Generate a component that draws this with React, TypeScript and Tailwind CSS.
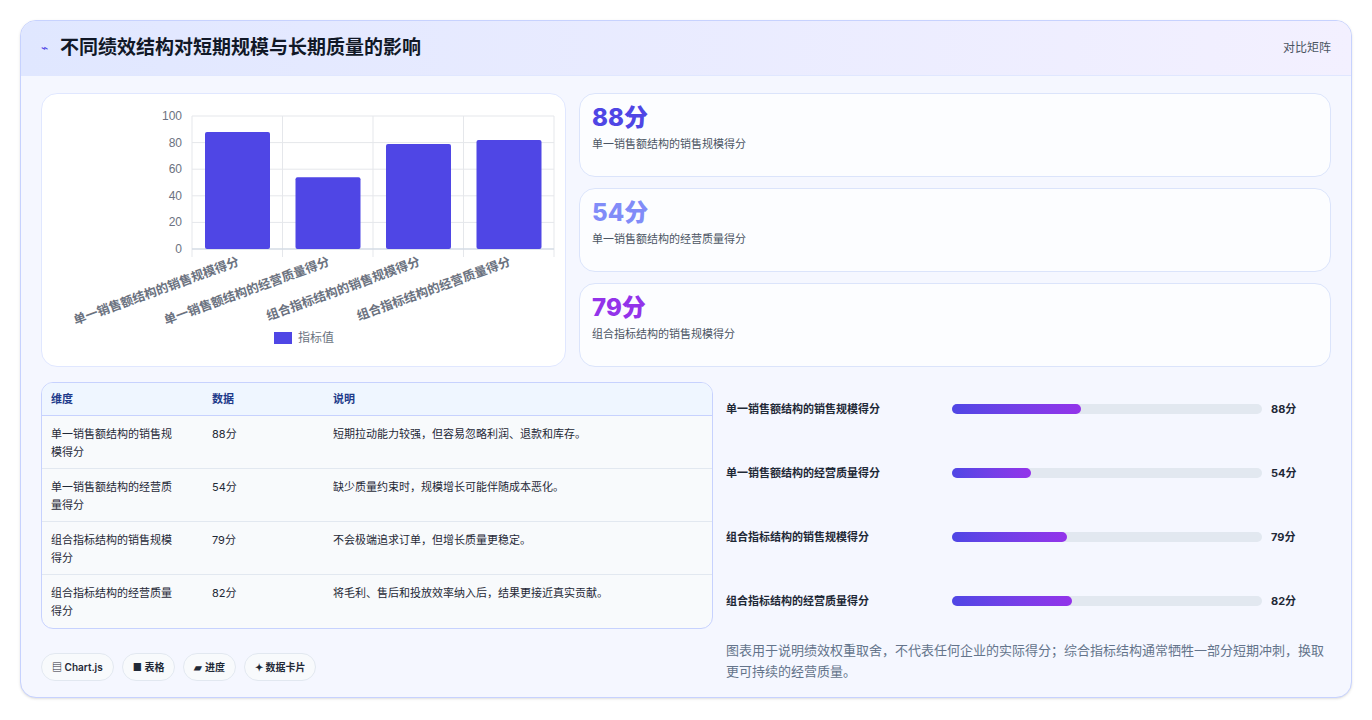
const font = { fontFamily: 'Inter, "Noto Sans CJK SC", sans-serif' };

const labels = ['单一销售额结构的销售规模得分', '单一销售额结构的经营质量得分', '组合指标结构的销售规模得分', '组合指标结构的经营质量得分'];
const values = [88, 54, 79, 82];
const barW = [129, 79, 115, 120];
const notes = [
  '短期拉动能力较强，但容易忽略利润、退款和库存。',
  '缺少质量约束时，规模增长可能伴随成本恶化。',
  '不会极端追求订单，但增长质量更稳定。',
  '将毛利、售后和投放效率纳入后，结果更接近真实贡献。',
];

function Chart() {
  const x0 = 150, x1 = 512, yTop = 22, yBot = 155;
  const step = (x1 - x0) / 4;
  return (
    <svg width="524" height="273" className="block">
      {[0, 20, 40, 60, 80, 100].map((v) => {
        const y = yBot - (v / 100) * (yBot - yTop);
        return (
          <g key={v}>
            <line x1={x0} x2={x1} y1={y} y2={y} stroke="#e5e7eb" />
            <text x={x0 - 10} y={y + 4} textAnchor="end" fontSize="12" fill="#6b7280" fontFamily="Liberation Sans, sans-serif">{v}</text>
          </g>
        );
      })}
      {[0, 1, 2, 3, 4].map((i) => (
        <line key={i} x1={x0 + i * step} x2={x0 + i * step} y1={yTop} y2={yBot + 8} stroke="#e5e7eb" />
      ))}
      <line x1={x0} x2={x1} y1={yBot} y2={yBot} stroke="#cbd5e1" />
      {values.map((v, i) => {
        const h = (v / 100) * (yBot - yTop);
        return <rect key={i} x={x0 + i * step + 13} y={yBot - h} width={65} height={h} rx="2" fill="#4f46e5" />;
      })}
      {labels.map((l, i) => (
        <text key={l} fontSize="12.5" fontWeight="600" fill="#6b7280" textAnchor="end" fontFamily='"Noto Sans CJK SC", sans-serif'
          transform={`translate(${x0 + i * step + 48},${yBot + 16}) rotate(-20)`}>{l}</text>
      ))}
      <rect x="232" y="238" width="18" height="12" fill="#4f46e5" />
      <text x="256" y="248" fontSize="12" fill="#6b7280" fontFamily='"Noto Sans CJK SC", sans-serif'>指标值</text>
    </svg>
  );
}

export default function App() {
  const stats = [
    { v: '88分', c: 'text-[#4f46e5]', l: labels[0] },
    { v: '54分', c: 'text-[#818cf8]', l: labels[1] },
    { v: '79分', c: 'text-[#9333ea]', l: labels[2] },
  ];
  return (
    <div style={font} className="min-h-[720px] bg-white p-5">
      <div className="rounded-2xl border border-[#c7d2fe] bg-[#f5f7ff] overflow-hidden shadow-sm h-[678px]">
        <div className="h-[55px] flex items-center justify-between px-5 bg-gradient-to-r from-[#e0e7ff] to-[#f3f0ff] border-b border-[#e0e7ff]">
          <div className="flex items-center gap-3">
            <span className="text-[#4f46e5] text-xs">⌁</span>
            <h1 className="text-[19px] font-bold text-[#111827]">不同绩效结构对短期规模与长期质量的影响</h1>
          </div>
          <span className="text-xs text-[#4b5563]">对比矩阵</span>
        </div>
        <div className="px-5 pt-[17px]">
          <div className="flex gap-[13px]">
            <div className="w-[525px] h-[274px] bg-white rounded-2xl border border-[#e0e7ff] overflow-hidden">
              <Chart />
            </div>
            <div className="flex-1 flex flex-col gap-[11px]">
              {stats.map((s) => (
                <div key={s.v} className="h-[84px] rounded-2xl border border-[#dbe4fb] bg-[#fcfdff] px-3 pt-2">
                  <div className={`text-2xl font-extrabold ${s.c}`}>{s.v}</div>
                  <div className="text-[11px] text-[#4b5563] mt-0.5">{s.l}</div>
                </div>
              ))}
            </div>
          </div>
          <div className="flex gap-[13px] mt-[15px]">
            <div className="w-[672px]">
              <div className="rounded-xl border border-[#c7d2fe] overflow-hidden bg-[#f8fafc] text-[11px]">
                <div className="grid grid-cols-[161px_121px_1fr] h-[33px] items-center px-[9px] bg-[#eff6ff] border-b border-[#c7d2fe] font-semibold text-[#1e3a8a]">
                  <span>维度</span><span>数据</span><span>说明</span>
                </div>
                {labels.map((l, i) => (
                  <div key={l} className={`grid grid-cols-[161px_121px_1fr] h-[53px] px-[9px] pt-[9px] leading-[18px] text-[#1f2937] ${i < 3 ? 'border-b border-[#e2e8f0]' : ''}`}>
                    <span className="pr-9">{l}</span><span>{values[i]}分</span><span>{notes[i]}</span>
                  </div>
                ))}
              </div>
              <div className="flex gap-2 mt-6 text-[10px] font-semibold text-[#1f2937]">
                {['▤ Chart.js', '■ 表格', '▰ 进度', '✦ 数据卡片'].map((t) => (
                  <span key={t} className="h-7 px-2.5 rounded-full border border-[#e2e8f0] bg-[#f8fafc] flex items-center">{t}</span>
                ))}
              </div>
            </div>
            <div className="flex-1 pt-5">
              <div className="flex flex-col gap-[50px]">
                {labels.map((l, i) => (
                  <div key={l} className="flex items-center h-[14px]">
                    <span className="w-[226px] text-[11px] font-semibold text-[#1f2937]">{l}</span>
                    <div className="w-[310px] h-[10px] rounded-full bg-[#e2e8f0]">
                      <div className="h-full rounded-full bg-gradient-to-r from-[#4f46e5] to-[#9333ea]" style={{ width: barW[i] }} />
                    </div>
                    <span className="ml-[9px] text-[11px] font-bold text-[#1f2937]">{values[i]}分</span>
                  </div>
                ))}
              </div>
              <p className="mt-[32px] text-[13px] leading-[21px] text-[#64748b]">图表用于说明绩效权重取舍，不代表任何企业的实际得分；综合指标结构通常牺牲一部分短期冲刺，换取更可持续的经营质量。</p>
            </div>
          </div>
        </div>
      </div>
    </div>
  );
}
